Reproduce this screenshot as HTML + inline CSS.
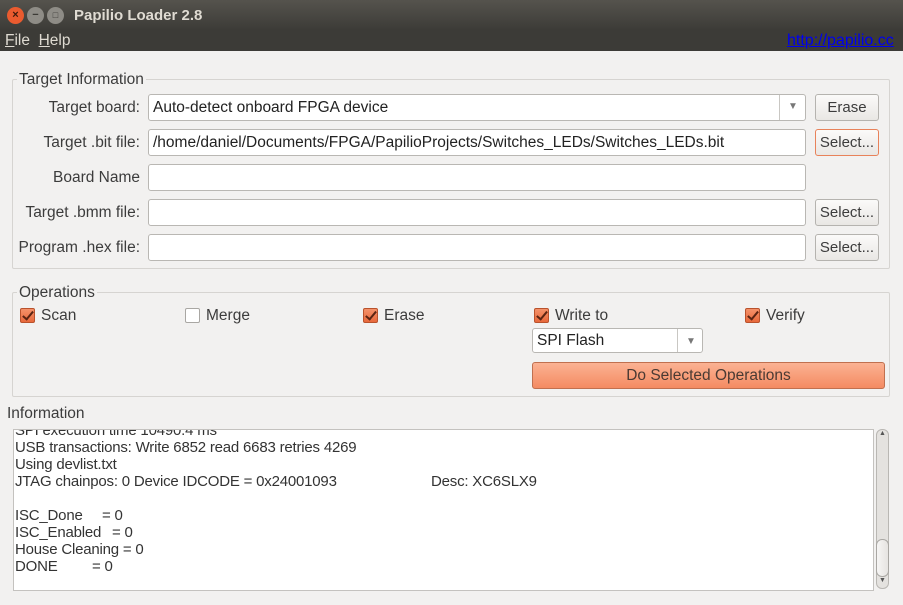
<!DOCTYPE html>
<html><head><meta charset="utf-8"><style>
*{margin:0;padding:0;box-sizing:border-box}
body{width:903px;height:605px;background:#f2f1f0;font-family:"Liberation Sans",sans-serif;font-size:15.5px;color:#3c3c3c;position:relative;overflow:hidden}
.a{position:absolute;white-space:nowrap}
.title{left:0;top:0;width:903px;height:29px;background:linear-gradient(#55534d,#3d3c38)}
.menu{left:0;top:29px;width:903px;height:22px;background:#3c3b37}
.wb{position:absolute;top:7px;width:17px;height:17px;border-radius:50%;font-size:11px;text-align:center;line-height:17px;font-weight:bold}
.frame{border:1px solid #d6d4d1;border-radius:2px}
.lbl{background:#f2f1f0;padding:0 2px}
.inp{background:#fff;border:1px solid #b9b7b3;border-radius:3px;height:27px;padding:2px 4px 0;line-height:22px;color:#222}
.btn{border:1px solid #b5b3af;border-radius:3px;height:27px;background:linear-gradient(#fbfaf9,#e9e7e4);text-align:center;line-height:22px;padding-top:2px;font-size:15px}
.rl{text-align:right;width:140px;left:0}
.cb{position:absolute;width:15px;height:15px;border-radius:2px}
.on{background:linear-gradient(#f4926a,#e8683b);border:1px solid #b9522c}
.off{background:#fff;border:1px solid #a9a7a3}
.on::after{content:"";position:absolute;left:4px;top:0px;width:4px;height:9px;border:solid #5a2412;border-width:0 2px 2px 0;transform:rotate(40deg)}
.tl{position:absolute;left:1px;color:#333;font-size:15px;letter-spacing:-0.2px}
</style></head><body>
<div class="a title"></div>
<div class="wb" style="left:7px;background:#ea5b2f;color:#3c1a0c">×</div>
<div class="wb" style="left:27px;background:#8e8c86;color:#3a3935">−</div>
<div class="wb" style="left:47px;background:#8e8c86;color:#3a3935;font-size:9px">□</div>
<div class="a" style="left:74px;top:7px;color:#dfdbd2;font-weight:bold;font-size:15px">Papilio Loader 2.8</div>
<div class="a menu"></div>
<div class="a" style="left:5px;top:32px;color:#dfdbd2"><u>F</u>ile&nbsp;&nbsp;<u>H</u>elp</div>
<div class="a" style="left:787px;top:32px;color:#0000ee;text-decoration:underline;font-size:16px">http://papilio.cc</div>

<div class="a frame" style="left:12px;top:79px;width:878px;height:190px"></div>
<div class="a lbl" style="left:17px;top:71px">Target Information</div>
<div class="a rl" style="top:99px">Target board:</div>
<div class="a inp" style="left:148px;top:94px;width:658px">Auto-detect onboard FPGA device</div>
<div class="a" style="left:779px;top:95px;width:1px;height:25px;background:#c9c7c3"></div>
<div class="a" style="left:788px;top:101px;color:#777;font-size:10px">▼</div>
<div class="a btn" style="left:815px;top:94px;width:64px">Erase</div>
<div class="a rl" style="top:134px">Target .bit file:</div>
<div class="a inp" style="left:148px;top:129px;width:658px">/home/daniel/Documents/FPGA/PapilioProjects/Switches_LEDs/Switches_LEDs.bit</div>
<div class="a btn" style="left:815px;top:129px;width:64px;border-color:#e8825a">Select...</div>
<div class="a rl" style="top:169px">Board Name</div>
<div class="a inp" style="left:148px;top:164px;width:658px"></div>
<div class="a rl" style="top:204px">Target .bmm file:</div>
<div class="a inp" style="left:148px;top:199px;width:658px"></div>
<div class="a btn" style="left:815px;top:199px;width:64px">Select...</div>
<div class="a rl" style="top:239px">Program .hex file:</div>
<div class="a inp" style="left:148px;top:234px;width:658px"></div>
<div class="a btn" style="left:815px;top:234px;width:64px">Select...</div>

<div class="a frame" style="left:12px;top:292px;width:878px;height:105px"></div>
<div class="a lbl" style="left:17px;top:284px">Operations</div>
<div class="cb on" style="left:20px;top:308px"></div><div class="a" style="left:41px;top:307px">Scan</div>
<div class="cb off" style="left:185px;top:308px"></div><div class="a" style="left:206px;top:307px">Merge</div>
<div class="cb on" style="left:363px;top:308px"></div><div class="a" style="left:384px;top:307px">Erase</div>
<div class="cb on" style="left:534px;top:308px"></div><div class="a" style="left:555px;top:307px">Write to</div>
<div class="cb on" style="left:745px;top:308px"></div><div class="a" style="left:766px;top:307px">Verify</div>
<div class="a inp" style="left:532px;top:328px;width:171px;height:25px;line-height:20px">SPI Flash</div>
<div class="a" style="left:677px;top:329px;width:1px;height:23px;background:#c9c7c3"></div>
<div class="a" style="left:686px;top:336px;color:#777;font-size:10px">▼</div>
<div class="a" style="left:532px;top:362px;width:353px;height:27px;border:1px solid #c0704f;border-radius:3px;background:linear-gradient(#fbb293,#f48b62);text-align:center;line-height:22px;padding-top:2px;color:#4a3a33">Do Selected Operations</div>

<div class="a" style="left:7px;top:405px">Information</div>
<div class="a" style="left:13px;top:429px;width:861px;height:162px;background:#fff;border:1px solid #c4c2bf;overflow:hidden">
<div class="tl" style="top:-8px">SPI execution time 10490.4 ms</div>
<div class="tl" style="top:9px">USB transactions: Write 6852 read 6683 retries 4269</div>
<div class="tl" style="top:26px">Using devlist.txt</div>
<div class="tl" style="top:43px">JTAG chainpos: 0 Device IDCODE = 0x24001093</div>
<div class="tl" style="top:43px;left:417px">Desc: XC6SLX9</div>
<div class="tl" style="top:77px">ISC_Done</div><div class="tl" style="top:77px;left:88px">= 0</div>
<div class="tl" style="top:94px">ISC_Enabled</div><div class="tl" style="top:94px;left:98px">= 0</div>
<div class="tl" style="top:111px">House Cleaning = 0</div>
<div class="tl" style="top:128px">DONE</div><div class="tl" style="top:128px;left:78px">= 0</div>
</div>
<div class="a" style="left:876px;top:429px;width:13px;height:160px;border:1px solid #b9b7b3;border-radius:6px;background:#e4e2df"></div>
<div class="a" style="left:879px;top:430px;font-size:7px;color:#555">▲</div>
<div class="a" style="left:879px;top:577px;font-size:7px;color:#555">▼</div>
<div class="a" style="left:876px;top:539px;width:13px;height:38px;border:1px solid #a9a7a3;border-radius:6px;background:linear-gradient(90deg,#f6f5f4,#e6e4e1)"></div>
</body></html>
